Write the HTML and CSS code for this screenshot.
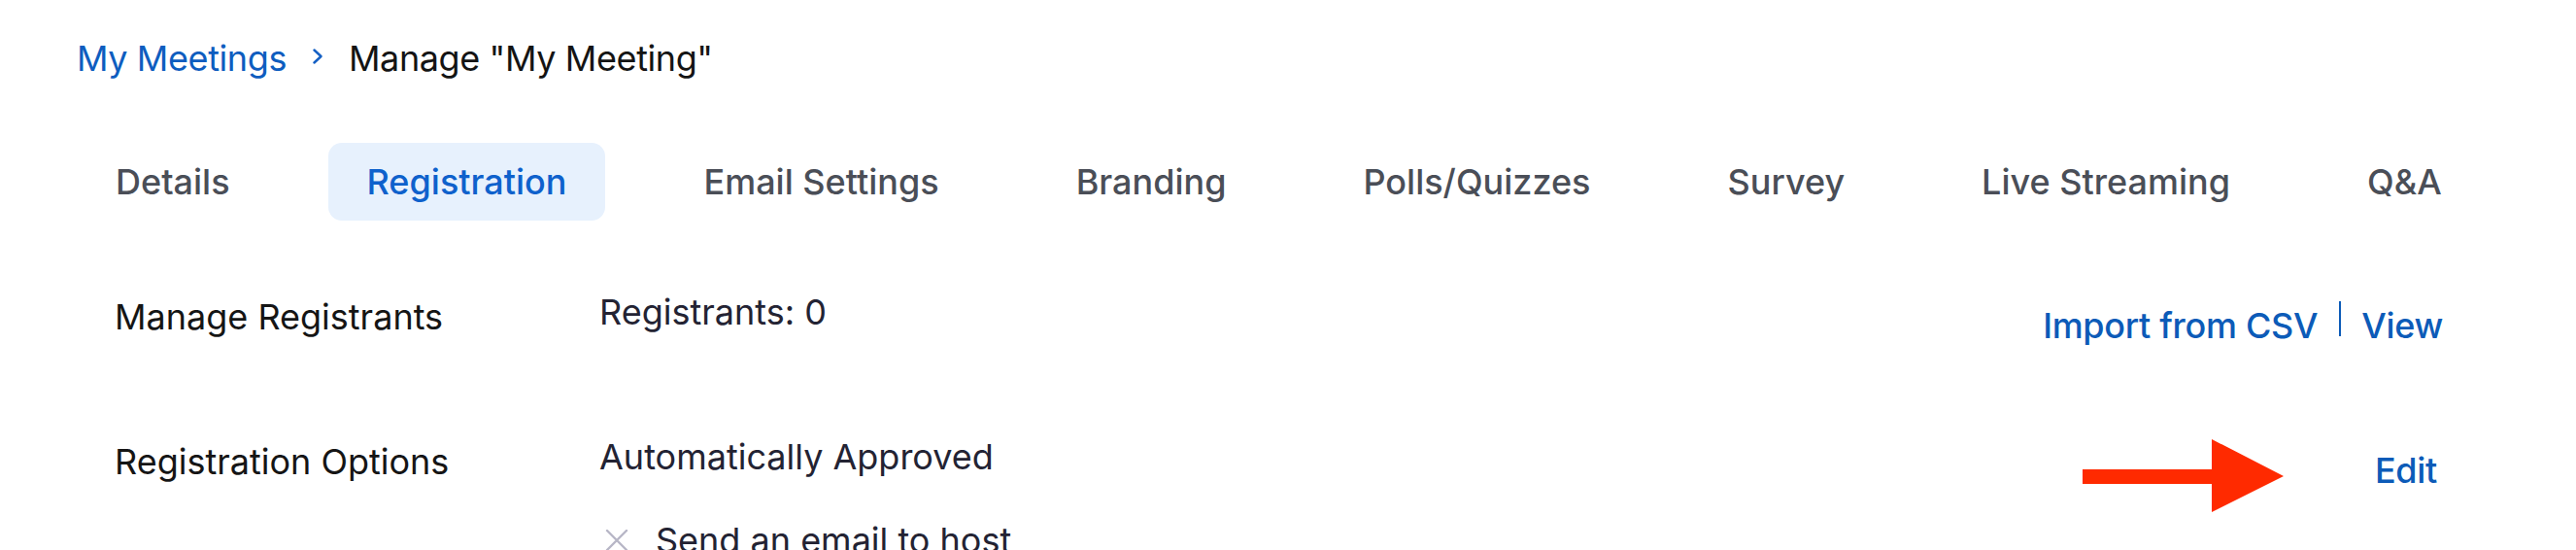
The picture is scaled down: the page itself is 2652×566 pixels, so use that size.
FILE: index.html
```html
<!DOCTYPE html>
<html lang="en">
<head>
<meta charset="utf-8">
<title>Manage "My Meeting"</title>
<link rel="stylesheet" href="styles.css">
</head>
<body>
<div class="page">
  <nav class="breadcrumb">
    <a class="crumb-link" href="#">My Meetings</a>
    <svg class="crumb-sep" width="12" height="16" viewBox="0 0 12 16"><path d="M2.5 1.5 L9.5 8 L2.5 14.5" fill="none" stroke="#1560c4" stroke-width="2.4" stroke-linecap="round" stroke-linejoin="round"/></svg>
    <span class="crumb-current">Manage &quot;My Meeting&quot;</span>
  </nav>

  <div class="tabs">
    <span class="tab">Details</span>
    <span class="tab active">Registration</span>
    <span class="tab">Email Settings</span>
    <span class="tab">Branding</span>
    <span class="tab">Polls/Quizzes</span>
    <span class="tab">Survey</span>
    <span class="tab">Live Streaming</span>
    <span class="tab">Q&amp;A</span>
  </div>

  <div class="rows">
    <div class="row">
      <div class="label">Manage Registrants</div>
      <div class="value">Registrants: 0</div>
      <div class="actions">
        <a class="link" href="#">Import from CSV</a>
        <span class="divider"></span>
        <a class="link" href="#">View</a>
      </div>
    </div>
    <div class="row">
      <div class="label">Registration Options</div>
      <div class="value">
        <div>Automatically Approved</div>
        <div class="option">
          <svg class="x-icon" width="24" height="22" viewBox="0 0 24 22"><path d="M2 1 L22 21 M22 1 L2 21" stroke="#b7b6c6" stroke-width="2.4" stroke-linecap="round"/></svg>
          <span>Send an email to host</span>
        </div>
      </div>
      <div class="actions edit-cell">
        <span class="edit-wrap">
          <svg class="arrow" width="208" height="76" viewBox="0 0 208 76"><path d="M0 31 H133 V0 L207 38 L133 75 V46 H0 Z" fill="#ff2a00"/></svg>
          <a class="link" href="#">Edit</a>
        </span>
      </div>
    </div>
  </div>
</div>
</body>
</html>
```
FILE: styles.css
```css
html, body {
  margin: 0;
  padding: 0;
  background: #ffffff;
}

body {
  font-family: "Inter", "Liberation Sans", Arial, sans-serif;
  font-size: 36px;
  line-height: 44px;
  color: #1b1b1f;
}

a {
  text-decoration: none;
}

.page {
  padding: 38px 137px 0 79px;
}

.breadcrumb {
  display: flex;
  align-items: center;
  height: 44px;
  letter-spacing: -0.4px;
}

.crumb-link {
  color: #0e5dbf;
  font-weight: 400;
}

.crumb-sep {
  margin: 0 26px 0 26px;
  position: relative;
  top: -2px;
}

.crumb-current {
  color: #141414;
}

.tabs {
  display: flex;
  gap: 61px;
  margin-top: 65px;
}

.tab {
  padding: 18px 40px;
  border-radius: 14px;
  color: #4a4e57;
  font-weight: 500;
  white-space: nowrap;
}

.tab.active {
  background: #e7f1fd;
  color: #0e61cc;
}

.rows {
  margin-top: 72px;
}

.row {
  display: grid;
  grid-template-columns: 499px 1fr auto;
  padding-left: 39px;
  min-height: 149px;
}

.label {
  padding-top: 5px;
  color: #151515;
}

.value {
  color: #232333;
}

.option {
  display: flex;
  align-items: center;
  margin-top: 42px;
}

.x-icon {
  margin: 0 28px 0 6px;
}

.actions {
  display: flex;
  align-items: flex-start;
  padding-top: 14px;
}

.link {
  color: #0c5bb8;
  font-weight: 500;
  letter-spacing: -0.3px;
}

.divider {
  width: 2px;
  height: 36px;
  background: #0c5bb8;
  margin: -3px 21px 0 22px;
}

.edit-cell {
  padding-right: 6px;
}

.edit-wrap {
  position: relative;
}

.arrow {
  position: absolute;
  right: calc(100% + 93px);
  top: -10px;
}
```
